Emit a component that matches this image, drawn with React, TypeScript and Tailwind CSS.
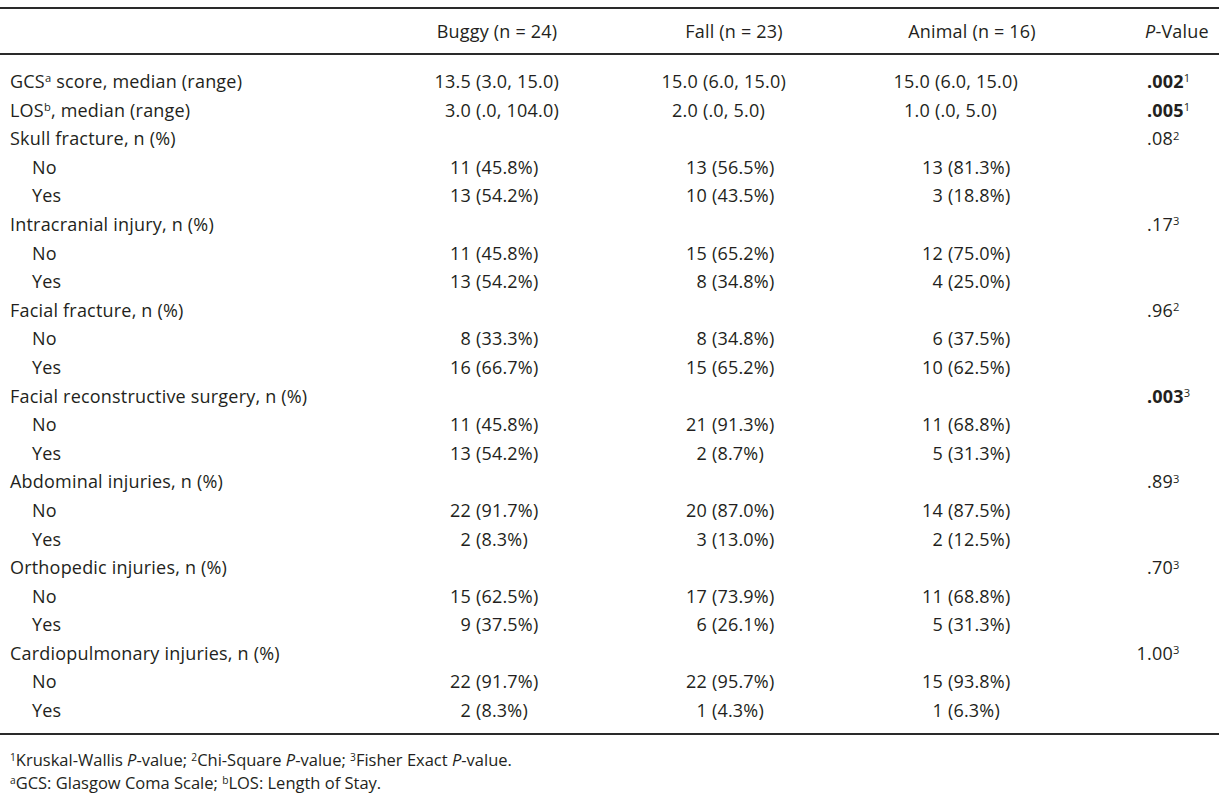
import React from 'react';

type Val = [string, string] | null;
type Row = {
  label: React.ReactNode;
  sub?: boolean;
  median?: boolean;
  b?: Val;
  f?: Val;
  a?: Val;
  p?: { int?: string; rest: string; sup: string; bold?: boolean };
};

const Sup = ({ children }: { children: React.ReactNode }) => (
  <span className="relative -top-[0.5em] text-[0.62em] font-normal leading-none">{children}</span>
);

const rows: Row[] = [
  { label: <>GCS<Sup>a</Sup> score, median (range)</>, median: true, b: ['13.5', '(3.0, 15.0)'], f: ['15.0', '(6.0, 15.0)'], a: ['15.0', '(6.0, 15.0)'], p: { rest: '.002', sup: '1', bold: true } },
  { label: <>LOS<Sup>b</Sup>, median (range)</>, median: true, b: ['3.0', '(.0, 104.0)'], f: ['2.0', '(.0, 5.0)'], a: ['1.0', '(.0, 5.0)'], p: { rest: '.005', sup: '1', bold: true } },
  { label: 'Skull fracture, n (%)', p: { rest: '.08', sup: '2' } },
  { label: 'No', sub: true, b: ['11', '(45.8%)'], f: ['13', '(56.5%)'], a: ['13', '(81.3%)'] },
  { label: 'Yes', sub: true, b: ['13', '(54.2%)'], f: ['10', '(43.5%)'], a: ['3', '(18.8%)'] },
  { label: 'Intracranial injury, n (%)', p: { rest: '.17', sup: '3' } },
  { label: 'No', sub: true, b: ['11', '(45.8%)'], f: ['15', '(65.2%)'], a: ['12', '(75.0%)'] },
  { label: 'Yes', sub: true, b: ['13', '(54.2%)'], f: ['8', '(34.8%)'], a: ['4', '(25.0%)'] },
  { label: 'Facial fracture, n (%)', p: { rest: '.96', sup: '2' } },
  { label: 'No', sub: true, b: ['8', '(33.3%)'], f: ['8', '(34.8%)'], a: ['6', '(37.5%)'] },
  { label: 'Yes', sub: true, b: ['16', '(66.7%)'], f: ['15', '(65.2%)'], a: ['10', '(62.5%)'] },
  { label: 'Facial reconstructive surgery, n (%)', p: { rest: '.003', sup: '3', bold: true } },
  { label: 'No', sub: true, b: ['11', '(45.8%)'], f: ['21', '(91.3%)'], a: ['11', '(68.8%)'] },
  { label: 'Yes', sub: true, b: ['13', '(54.2%)'], f: ['2', '(8.7%)'], a: ['5', '(31.3%)'] },
  { label: 'Abdominal injuries, n (%)', p: { rest: '.89', sup: '3' } },
  { label: 'No', sub: true, b: ['22', '(91.7%)'], f: ['20', '(87.0%)'], a: ['14', '(87.5%)'] },
  { label: 'Yes', sub: true, b: ['2', '(8.3%)'], f: ['3', '(13.0%)'], a: ['2', '(12.5%)'] },
  { label: 'Orthopedic injuries, n (%)', p: { rest: '.70', sup: '3' } },
  { label: 'No', sub: true, b: ['15', '(62.5%)'], f: ['17', '(73.9%)'], a: ['11', '(68.8%)'] },
  { label: 'Yes', sub: true, b: ['9', '(37.5%)'], f: ['6', '(26.1%)'], a: ['5', '(31.3%)'] },
  { label: 'Cardiopulmonary injuries, n (%)', p: { int: '1', rest: '.00', sup: '3' } },
  { label: 'No', sub: true, b: ['22', '(91.7%)'], f: ['22', '(95.7%)'], a: ['15', '(93.8%)'] },
  { label: 'Yes', sub: true, b: ['2', '(8.3%)'], f: ['1', '(4.3%)'], a: ['1', '(6.3%)'] },
];

function Cell({ v, numW }: { v?: Val; numW: string }) {
  if (!v) return <div />;
  return (
    <div className="whitespace-pre">
      <span className={`${numW} inline-block text-right`}>{v[0]}</span>
      <span> {v[1]}</span>
    </div>
  );
}

export default function App() {
  return (
    <div className="w-[1219px] h-[794px] bg-white text-[#231f20] font-['Open_Sans',sans-serif] text-[18px] tracking-[0.2px] pt-[7px]">
      <div className="h-[2px] bg-[#2a2a2a]" />
      <div className="grid grid-cols-[400px_220px_240px_240px_119px] h-[44px] items-center">
        <div />
        <div className="w-[194px] text-center">Buggy (n = 24)</div>
        <div className="w-[228px] text-center">Fall (n = 23)</div>
        <div className="w-[224px] text-center">Animal (n = 16)</div>
        <div className="pl-[45px] whitespace-nowrap"><i>P</i>-Value</div>
      </div>
      <div className="h-[2px] bg-[#2a2a2a]" />

      <div className="grid grid-cols-[400px_220px_240px_240px_119px] leading-[28.6px] pt-[12px] pb-[8px]">
        {rows.map((r, i) => (
          <React.Fragment key={i}>
            <div className={r.sub ? 'pl-[32px]' : 'pl-[10px]'}>{r.label}</div>
            <Cell v={r.b} numW="w-[71px]" />
            <Cell v={r.f} numW={r.median ? 'w-[78px]' : 'w-[87px]'} />
            <Cell v={r.a} numW={r.median ? 'w-[70px]' : 'w-[83px]'} />
            <div className="whitespace-nowrap">
              {r.p && (
                <>
                  <span className="inline-block w-[47px] text-right">{r.p.int}</span>
                  <span className={r.p.bold ? 'font-bold' : ''}>{r.p.rest}</span>
                  <Sup>{r.p.sup}</Sup>
                </>
              )}
            </div>
          </React.Fragment>
        ))}
      </div>
      <div className="h-[2px] bg-[#2a2a2a]" />

      <div className="pl-[10px] pt-[13px] text-[16.5px] tracking-normal leading-[23px]">
        <div>
          <Sup>1</Sup>Kruskal-Wallis <i>P</i>-value; <Sup>2</Sup>Chi-Square <i>P</i>-value; <Sup>3</Sup>Fisher Exact <i>P</i>-value.
        </div>
        <div>
          <Sup>a</Sup>GCS: Glasgow Coma Scale; <Sup>b</Sup>LOS: Length of Stay.
        </div>
      </div>
    </div>
  );
}
